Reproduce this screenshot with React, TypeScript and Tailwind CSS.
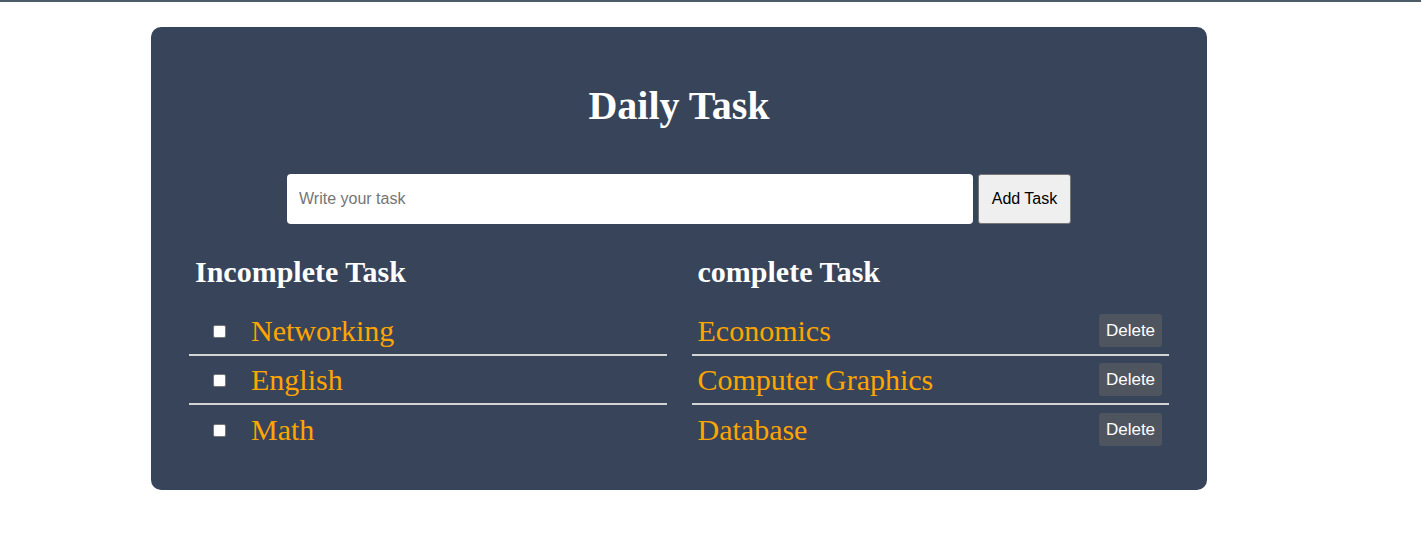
const incomplete = ['Networking', 'English', 'Math'];
const complete = ['Economics', 'Computer Graphics', 'Database'];

export default function App() {
  return (
    <div className="min-h-screen bg-white">
      <div className="h-[2px] bg-[#4b5b67]" />
      <div className="ml-[151px] mt-[25px] w-[1056px] rounded-[10px] bg-[#374459] px-[38px] pt-[56px] pb-[36px] font-['Liberation_Serif',serif]">
        <h1 className="text-center text-[40px] font-bold leading-[45px] text-white">Daily Task</h1>

        <div className="mt-[46px] flex justify-center gap-[5px] font-['Liberation_Sans',Arial,sans-serif] text-[16px]">
          <input
            type="text"
            placeholder="Write your task"
            className="h-[50px] w-[686px] rounded-[4px] bg-white px-[12px] text-black outline-none placeholder:text-[#757575]"
          />
          <button className="h-[50px] w-[93px] rounded-[3px] border border-[#767676] bg-[#efefef] text-black">
            Add Task
          </button>
        </div>

        <div className="mt-[31px] grid grid-cols-2 gap-[25px]">
          <div>
            <h2 className="pl-[6px] text-[30px] font-bold leading-[34px] text-white">Incomplete Task</h2>
            <ul className="mt-[18px]">
              {incomplete.map((t, i) => (
                <li
                  key={t}
                  className={`flex h-[49px] items-center ${i < incomplete.length - 1 ? 'border-b-2 border-[#d4d4d4]' : ''}`}
                >
                  <input
                    type="checkbox"
                    className="ml-[24px] mt-[2px] h-[13px] w-[13px] appearance-none rounded-[2px] border border-[#767676] bg-white"
                  />
                  <span className="ml-[25px] text-[30px] leading-[34px] text-[#ffa500]">{t}</span>
                </li>
              ))}
            </ul>
          </div>
          <div>
            <h2 className="pl-[6px] text-[30px] font-bold leading-[34px] text-white">complete Task</h2>
            <ul className="mt-[18px]">
              {complete.map((t, i) => (
                <li
                  key={t}
                  className={`flex h-[49px] items-center justify-between ${i < complete.length - 1 ? 'border-b-2 border-[#d4d4d4]' : ''}`}
                >
                  <span className="pl-[6px] text-[30px] leading-[34px] text-[#ffa500]">{t}</span>
                  <button className="mr-[7px] h-[33px] w-[63px] rounded-[3px] bg-[#4f555e] font-['Liberation_Sans',Arial,sans-serif] text-[17px] text-white">
                    Delete
                  </button>
                </li>
              ))}
            </ul>
          </div>
        </div>
      </div>
    </div>
  );
}
